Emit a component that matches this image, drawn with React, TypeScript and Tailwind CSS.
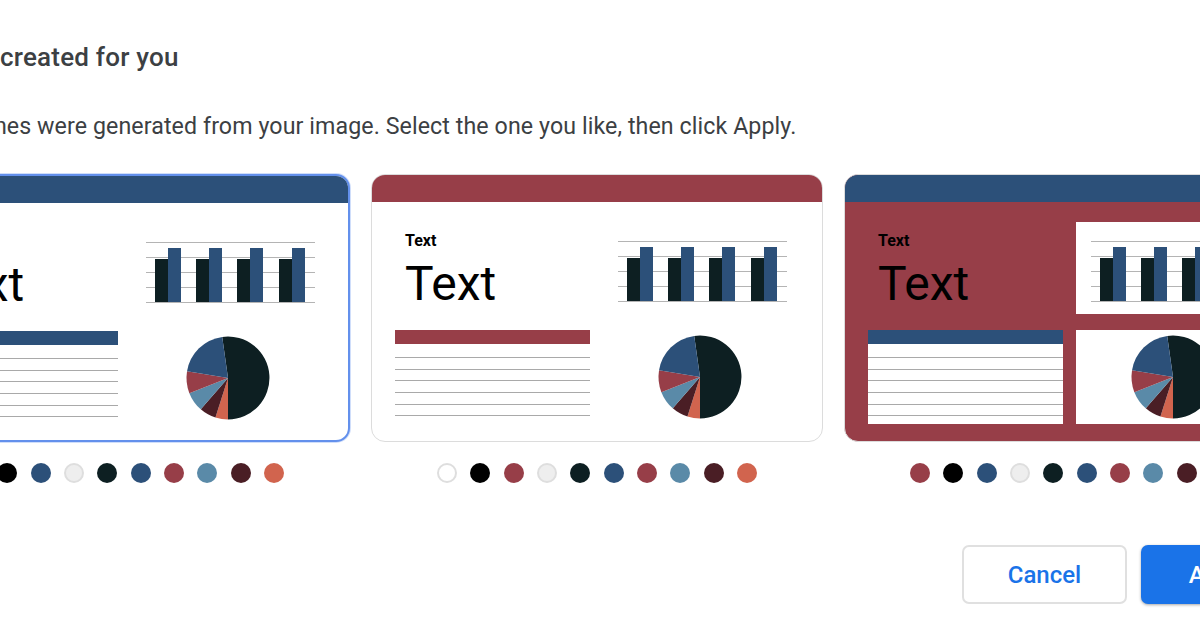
import React from "react";

const C = {
  blue: "#2c5079",
  red: "#973e48",
  dark: "#0d1f22",
  light: "#5a8aa8",
  maroon: "#4a1e25",
  orange: "#d1644e",
  gray: "#eeeeee",
};

function BarChart() {
  const groups = [24, 65, 106, 148];
  const grid = [19, 34, 49, 64, 79];
  return (
    <svg width="196" height="92" viewBox="0 0 196 92">
      {grid.map((y) => (
        <line key={y} x1="15" x2="184" y1={y + 0.5} y2={y + 0.5} stroke="#b4b4b4" strokeWidth="1" />
      ))}
      {groups.map((x) => (
        <g key={x}>
          <rect x={x} y={36} width={13} height={43} fill={C.dark} />
          <rect x={x + 13} y={25} width={13} height={54} fill={C.blue} />
        </g>
      ))}
    </svg>
  );
}

function Pie() {
  const r = 41.5;
  const a = (x: number, y: number) => `A${r} ${r} 0 0 1 ${x} ${y}`;
  return (
    <svg width="196" height="94" viewBox="0 0 196 94">
      <path d={`M97 47 L91.22 5.9 A${r} ${r} 0 1 1 97 88.5 Z`} fill={C.dark} />
      <path d={`M97 47 L97 88.5 ${a(84.45, 86.56)} Z`} fill={C.orange} />
      <path d={`M97 47 L84.45 86.56 ${a(69.77, 78.32)} Z`} fill={C.maroon} />
      <path d={`M97 47 L69.77 78.32 ${a(58.36, 62.14)} Z`} fill={C.light} />
      <path d={`M97 47 L58.36 62.14 ${a(56.04, 40.29)} Z`} fill={C.red} />
      <path d={`M97 47 L56.04 40.29 ${a(91.22, 5.9)} Z`} fill={C.blue} />
    </svg>
  );
}

function Table({ color, filled }: { color: string; filled: boolean }) {
  const lines = [27, 39, 50, 62, 74, 85];
  return (
    <svg width="195" height="94" viewBox="0 0 195 94">
      {filled && <rect x="0" y="0" width="195" height="94" fill="#ffffff" />}
      <rect x="0" y="0" width="195" height="14" fill={color} />
      {lines.map((y) => (
        <line key={y} x1="0" x2="195" y1={y + 0.5} y2={y + 0.5} stroke="#a9a9a9" strokeWidth="1" />
      ))}
    </svg>
  );
}

type Variant = "a" | "b" | "c";

function Card({ variant }: { variant: Variant }) {
  const header = variant === "b" ? C.red : C.blue;
  const body = variant === "c" ? "bg-[#973e48]" : "bg-white";
  const border =
    variant === "a"
      ? "border-2 border-[#6390ec] shadow-[0_0_0_1px_rgba(120,160,240,0.35)]"
      : "border border-[#dcdcdc]";
  const tableColor = variant === "b" ? C.red : C.blue;
  const panel = variant === "c" ? "bg-white" : "";
  return (
    <div className={`w-[452px] h-[268px] rounded-[14px] overflow-hidden flex flex-col ${border} ${body}`}>
      <div className="h-[27px] shrink-0" style={{ background: header }} />
      <div className="grid grid-cols-[195px_196px] grid-rows-[92px_94px] gap-x-[13px] gap-y-[16px] pl-[23px] pt-[20px]">
        <div className="pl-[10px] pt-[9px] text-black">
          <div className="text-[16px] leading-[20px] font-bold">Text</div>
          <div className="text-[48px] leading-none mt-[9px]">Text</div>
        </div>
        <div className={panel}>
          <BarChart />
        </div>
        <div>
          <Table color={tableColor} filled={variant === "c"} />
        </div>
        <div className={panel}>
          <Pie />
        </div>
      </div>
    </div>
  );
}

function Dots({ colors }: { colors: string[] }) {
  return (
    <div className="flex justify-center gap-[13.3px] mt-[21px]">
      {colors.map((c, i) => {
        const bordered = c === "#ffffff" || c === C.gray;
        return (
          <div
            key={i}
            className={`w-[20px] h-[20px] rounded-full ${bordered ? "border-2 border-[#dedede]" : ""}`}
            style={{ background: c }}
          />
        );
      })}
    </div>
  );
}

export default function App() {
  const tail = [C.gray, C.dark, C.blue, C.red, C.light, C.maroon, C.orange];
  const sets: { v: Variant; colors: string[] }[] = [
    { v: "a", colors: ["#ffffff", "#000000", C.blue, ...tail] },
    { v: "b", colors: ["#ffffff", "#000000", C.red, ...tail] },
    { v: "c", colors: [C.red, "#000000", C.blue, ...tail] },
  ];
  return (
    <div className="w-[1200px] h-[630px] overflow-hidden bg-white font-['Roboto',sans-serif]">
      <div className="ml-[-102px] w-[1399px] pt-[41px]">
        <h1 className="text-[26px] leading-[32px] font-medium tracking-[0.2px] text-[#3c4043]">
          Themes created for you
        </h1>
        <p className="text-[23.2px] leading-[28px] tracking-[0.09px] text-[#3c4043] mt-[39px] ml-[-14px]">
          These themes were generated from your image. Select the one you like, then click Apply.
        </p>
        <div className="flex gap-[21px] mt-[34px]">
          {sets.map((s) => (
            <div key={s.v} className="flex flex-col">
              <Card variant={s.v} />
              <Dots colors={s.colors} />
            </div>
          ))}
        </div>
        <div className="flex justify-end gap-[14px] mt-[62px]">
          <button className="w-[165px] h-[59px] rounded-[7px] border-2 border-[#e0e0e0] bg-white text-[#1a73e8] text-[24px] font-medium">
            Cancel
          </button>
          <button className="w-[156px] h-[59px] rounded-[7px] bg-[#1a73e8] text-white text-[24px] font-medium shadow-[0_1px_3px_rgba(0,0,0,0.35)]">
            Apply
          </button>
        </div>
      </div>
    </div>
  );
}
